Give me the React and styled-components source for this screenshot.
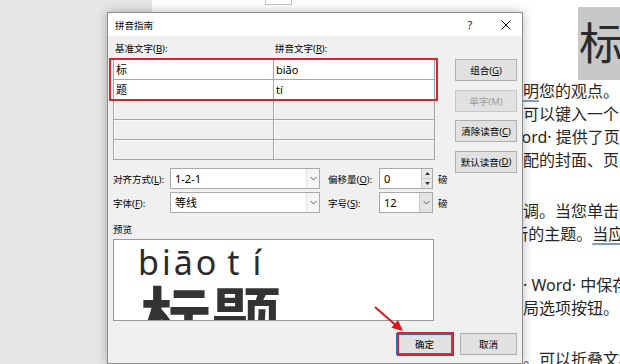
import React from 'react';
import styled, { createGlobalStyle } from 'styled-components';

const UI = `"Noto Sans", "Noto Sans CJK SC", sans-serif`;

const Global = createGlobalStyle`
  html, body { margin: 0; padding: 0; width: 620px; height: 364px; overflow: hidden; background: #fff; }
  #root { width: 620px; height: 364px; }
  * { box-sizing: border-box; }
`;

const Screen = styled.div`
  position: relative;
  width: 620px;
  height: 364px;
  display: flex;
  overflow: hidden;
`;

const Margin = styled.div`
  width: 152px;
  flex: none;
  background: #e6e6e6;
`;

const Page = styled.div`
  flex: 1;
  min-width: 0;
  background: #fff;
  overflow: hidden;
`;

const PageColumn = styled.div`
  padding-left: 51px;
  font-family: ${UI};
  color: #262626;
`;

const HeaderMark = styled.div`
  margin-left: 62px;
  width: 27px;
  height: 5px;
  border: 1px solid #c4c4c4;
  border-top: none;
`;

const Heading = styled.div`
  margin: 2px 0 0 375px;
  height: 73px;
  line-height: 73px;
  padding-left: 1px;
  background: #c8c8c8;
  font-size: 44px;
  white-space: nowrap;
  color: #2b2b2b;
`;

const Para = styled.div`
  margin-bottom: 28px;
`;

const Line = styled.div`
  height: 23px;
  line-height: 23px;
  font-size: 16px;
  white-space: nowrap;
  text-indent: ${(p) => p.$shift || 0}px;
`;

const Grammar = styled.span`
  text-decoration: underline;
  text-decoration-color: #7d9bd1;
  text-decoration-thickness: 1.5px;
  text-underline-offset: 3px;
`;

/* ---------- dialog ---------- */

const Dialog = styled.div`
  position: absolute;
  left: 107px;
  top: 12px;
  width: 416px;
  height: 352px;
  border: 1px solid #8c8c8c;
  background: #f0f0f0;
  box-shadow: 0 0 10px rgba(0, 0, 0, 0.28);
  display: flex;
  flex-direction: column;
  font-family: ${UI};
  color: #000;
`;

const TitleBar = styled.div`
  height: 23px;
  flex: none;
  background: #fff;
  display: flex;
  align-items: center;
  padding: 0 4px 0 7px;
  font-size: 9.5px;
`;

const TitleText = styled.span`
  flex: 1;
`;

const TitleButton = styled.div`
  width: 24px;
  height: 23px;
  display: flex;
  align-items: center;
  justify-content: center;
  font-size: 11px;
  color: #222;
  margin-left: ${(p) => p.$gap || 0}px;
`;

const Body = styled.div`
  flex: 1;
  padding: 6px 5px 0 5px;
  display: flex;
  flex-direction: column;
`;

const MainRow = styled.div`
  display: flex;
  align-items: flex-start;
`;

const LeftColumn = styled.div`
  width: 342px;
  flex: none;
`;

const HeaderRow = styled.div`
  display: grid;
  grid-template-columns: 160px 161px;
  height: 14px;
  line-height: 14px;
  font-size: 9.5px;
`;

const HeaderLabel = styled.span`
  padding-left: 2px;
`;

const Table = styled.div`
  margin-top: 3px;
  width: 322px;
  display: grid;
  grid-template-columns: 160px 161px;
  grid-auto-rows: 20px;
  border-top: 1px solid #a6a6a6;
  border-left: 1px solid #a6a6a6;
`;

const Cell = styled.div`
  border-right: 1px solid #a6a6a6;
  border-bottom: 1px solid #a6a6a6;
  background: ${(p) => (p.$empty ? '#f0f0f0' : '#fff')};
  box-shadow: ${(p) => (p.$empty ? 'inset 1px 1px 0 #fafafa' : 'none')};
  padding-left: 2px;
  line-height: 19px;
  font-size: 11px;
`;

const SideButtons = styled.div`
  padding-top: 17px;
  width: 62px;
  display: flex;
  flex-direction: column;
  gap: 8.5px;
`;

const Button = styled.div`
  height: 22px;
  width: ${(p) => p.$w || 62}px;
  display: flex;
  align-items: center;
  justify-content: center;
  background: #e1e1e1;
  border: ${(p) => (p.$default ? '2px solid #2f6fc4' : p.$disabled ? '1px solid #c6c6c6' : '1px solid #adadad')};
  color: ${(p) => (p.$disabled ? '#9a9a9a' : '#000')};
  font-size: 9.5px;
`;

const Options = styled.div`
  margin-top: 8px;
  display: flex;
  flex-direction: column;
  gap: 3px;
`;

const OptionRow = styled.div`
  display: grid;
  grid-template-columns: 57px 150px 59px 54px auto;
  height: 21px;
  align-items: center;
  font-size: 9.5px;
`;

const OptLabel = styled.span`
  padding-left: ${(p) => p.$pad || 0}px;
`;

const Field = styled.div`
  height: 21px;
  display: flex;
  align-items: stretch;
  background: #fff;
  border: 1px solid #a9a9a9;
`;

const FieldText = styled.span`
  flex: 1;
  padding-left: 4px;
  line-height: 19px;
  font-size: 11px;
`;

const DropPart = styled.div`
  width: 13px;
  flex: none;
  display: flex;
  align-items: center;
  justify-content: center;
  border-left: 1px solid ${(p) => (p.$shaded ? '#c9c9c9' : '#e2e2e2')};
  background: ${(p) => (p.$shaded ? '#e4e4e4' : '#f5f5f5')};
`;

const SpinPart = styled.div`
  width: 11px;
  flex: none;
  display: flex;
  flex-direction: column;
  border-left: 1px solid #c9c9c9;
`;

const SpinHalf = styled.div`
  flex: 1;
  display: flex;
  align-items: center;
  justify-content: center;
  background: #e8e8e8;
  border-top: ${(p) => (p.$lower ? '1px solid #c9c9c9' : 'none')};
`;

const Unit = styled.span`
  padding-left: 5px;
`;

const PreviewLabel = styled.div`
  margin-top: 10px;
  height: 14px;
  line-height: 14px;
  font-size: 9.5px;
`;

const Preview = styled.div`
  margin-top: 2px;
  width: 321px;
  height: 82px;
  background: #fff;
  border: 1px solid #9a9a9a;
  overflow: hidden;
  padding-top: 5px;
`;

const PinyinRow = styled.div`
  display: flex;
  height: 34px;
  line-height: 34px;
  font-family: "Noto Sans", sans-serif;
  font-size: 34px;
  color: #2a2a2a;
  padding-left: 24px;
  white-space: nowrap;
`;

const Pinyin = styled.span`
  letter-spacing: ${(p) => p.$ls || 0}px;
  margin-left: ${(p) => p.$ml || 0}px;
`;

const HanziRow = styled.div`
  margin-top: 2px;
  padding-left: 27px;
  font-family: "Noto Sans CJK SC", sans-serif;
  font-weight: 700;
  font-size: 70px;
  line-height: 70px;
  color: #333;
  white-space: nowrap;
`;

const BottomRow = styled.div`
  margin-top: 12px;
  display: flex;
  justify-content: flex-end;
  gap: 7px;
`;

const Callout = styled.div`
  position: absolute;
  left: ${(p) => p.$x}px;
  top: ${(p) => p.$y}px;
  width: ${(p) => p.$w}px;
  height: ${(p) => p.$h}px;
  border: 2px solid #d5262d;
  pointer-events: none;
`;

const ArrowLayer = styled.svg`
  position: absolute;
  left: 0;
  top: 0;
  pointer-events: none;
`;

const Chevron = () => (
  <svg width="7" height="5" viewBox="0 0 7 5">
    <polyline points="0.5,1 3.5,4 6.5,1" fill="none" stroke="#606060" strokeWidth="1" />
  </svg>
);

const Tri = ({ down }) => (
  <svg width="5" height="3" viewBox="0 0 5 3">
    <polygon points={down ? '0,0 5,0 2.5,3' : '0,3 5,3 2.5,0'} fill="#333" />
  </svg>
);

const Key = ({ k }) => (
  <>
    (<u>{k}</u>)
  </>
);

export default function App() {
  return (
    <>
      <Global />
      <Screen>
        <Margin />
        <Page>
          <PageColumn>
            <HeaderMark />
            <Heading>标题</Heading>
            <Para>
              <Line>视频提供了一种功能强大的方法，可帮助您证<Grammar>明</Grammar>您的观点。当您单击联机视频时</Line>
              <Line>想要添加的视频的嵌入代码中进行粘贴。您也可以键入一个关键字以联机搜索</Line>
              <Line>文档的视频。为使您的文档具有专业外观，Word· 提供了页眉、页脚、封面</Line>
              <Line>，这些设计可互为补充。例如，您可以添加匹配的封面、页眉和提要栏。</Line>
            </Para>
            <Para>
              <Line>另外，主题和样式也有助于让您的文档保持协调。当您单击设计并选择</Line>
              <Line $shift={-7}>图片、图表或·SmartArt·图形将会更改以匹配新的主题。<Grammar>当应</Grammar>用样式时</Line>
            </Para>
            <Para>
              <Line>现在，您可以使用在需要位置出现的新按钮在· Word· 中保存时间。</Line>
              <Line>档的方式，请单击该图片，图片旁边会显示布局选项按钮。</Line>
            </Para>
            <Para>
              <Line>您还会发现，在新的阅读视图中阅读更加容易。可以折叠文档某些部分</Line>
            </Para>
          </PageColumn>
        </Page>

        <Dialog>
          <TitleBar>
            <TitleText>拼音指南</TitleText>
            <TitleButton>?</TitleButton>
            <TitleButton $gap={12}>
              <svg width="10" height="10" viewBox="0 0 10 10">
                <path d="M0.5 0.5 L9.5 9.5 M9.5 0.5 L0.5 9.5" stroke="#111" strokeWidth="1" />
              </svg>
            </TitleButton>
          </TitleBar>
          <Body>
            <MainRow>
              <LeftColumn>
                <HeaderRow>
                  <HeaderLabel>基准文字<Key k="B" />:</HeaderLabel>
                  <HeaderLabel>拼音文字<Key k="R" />:</HeaderLabel>
                </HeaderRow>
                <Table>
                  <Cell>标</Cell>
                  <Cell>biāo</Cell>
                  <Cell>题</Cell>
                  <Cell>tí</Cell>
                  <Cell $empty />
                  <Cell $empty />
                  <Cell $empty />
                  <Cell $empty />
                  <Cell $empty />
                  <Cell $empty />
                </Table>

                <Options>
                  <OptionRow>
                    <OptLabel>对齐方式<Key k="L" />:</OptLabel>
                    <Field>
                      <FieldText>1-2-1</FieldText>
                      <DropPart><Chevron /></DropPart>
                    </Field>
                    <OptLabel $pad={8}>偏移量<Key k="O" />:</OptLabel>
                    <Field>
                      <FieldText>0</FieldText>
                      <SpinPart>
                        <SpinHalf><Tri /></SpinHalf>
                        <SpinHalf $lower><Tri down /></SpinHalf>
                      </SpinPart>
                    </Field>
                    <Unit>磅</Unit>
                  </OptionRow>
                  <OptionRow>
                    <OptLabel>字体<Key k="F" />:</OptLabel>
                    <Field>
                      <FieldText>等线</FieldText>
                      <DropPart><Chevron /></DropPart>
                    </Field>
                    <OptLabel $pad={8}>字号<Key k="S" />:</OptLabel>
                    <Field>
                      <FieldText>12</FieldText>
                      <DropPart $shaded><Chevron /></DropPart>
                    </Field>
                    <Unit>磅</Unit>
                  </OptionRow>
                </Options>

                <PreviewLabel>预览</PreviewLabel>
                <Preview>
                  <PinyinRow>
                    <Pinyin $ls={3}>biāo</Pinyin>
                    <Pinyin $ml={8}>t</Pinyin>
                    <Pinyin $ml={13}>í</Pinyin>
                  </PinyinRow>
                  <HanziRow>标题</HanziRow>
                </Preview>
              </LeftColumn>

              <SideButtons>
                <Button>组合<Key k="G" /></Button>
                <Button $disabled>单字(M)</Button>
                <Button>清除读音<Key k="C" /></Button>
                <Button>默认读音<Key k="D" /></Button>
              </SideButtons>
            </MainRow>

            <BottomRow>
              <Button $w={57} $default>确定</Button>
              <Button $w={57}>取消</Button>
            </BottomRow>
          </Body>
        </Dialog>

        <Callout $x={109} $y={58} $w={329} $h={43} />
        <Callout $x={397} $y={332} $w={57} $h={24} />
        <ArrowLayer width="620" height="364" viewBox="0 0 620 364">
          <line x1="375" y1="307" x2="395" y2="324.5" stroke="#e0141b" strokeWidth="2" />
          <polygon points="403,331 391.4,327.7 397.9,320.1" fill="#e0141b" />
        </ArrowLayer>
      </Screen>
    </>
  );
}
